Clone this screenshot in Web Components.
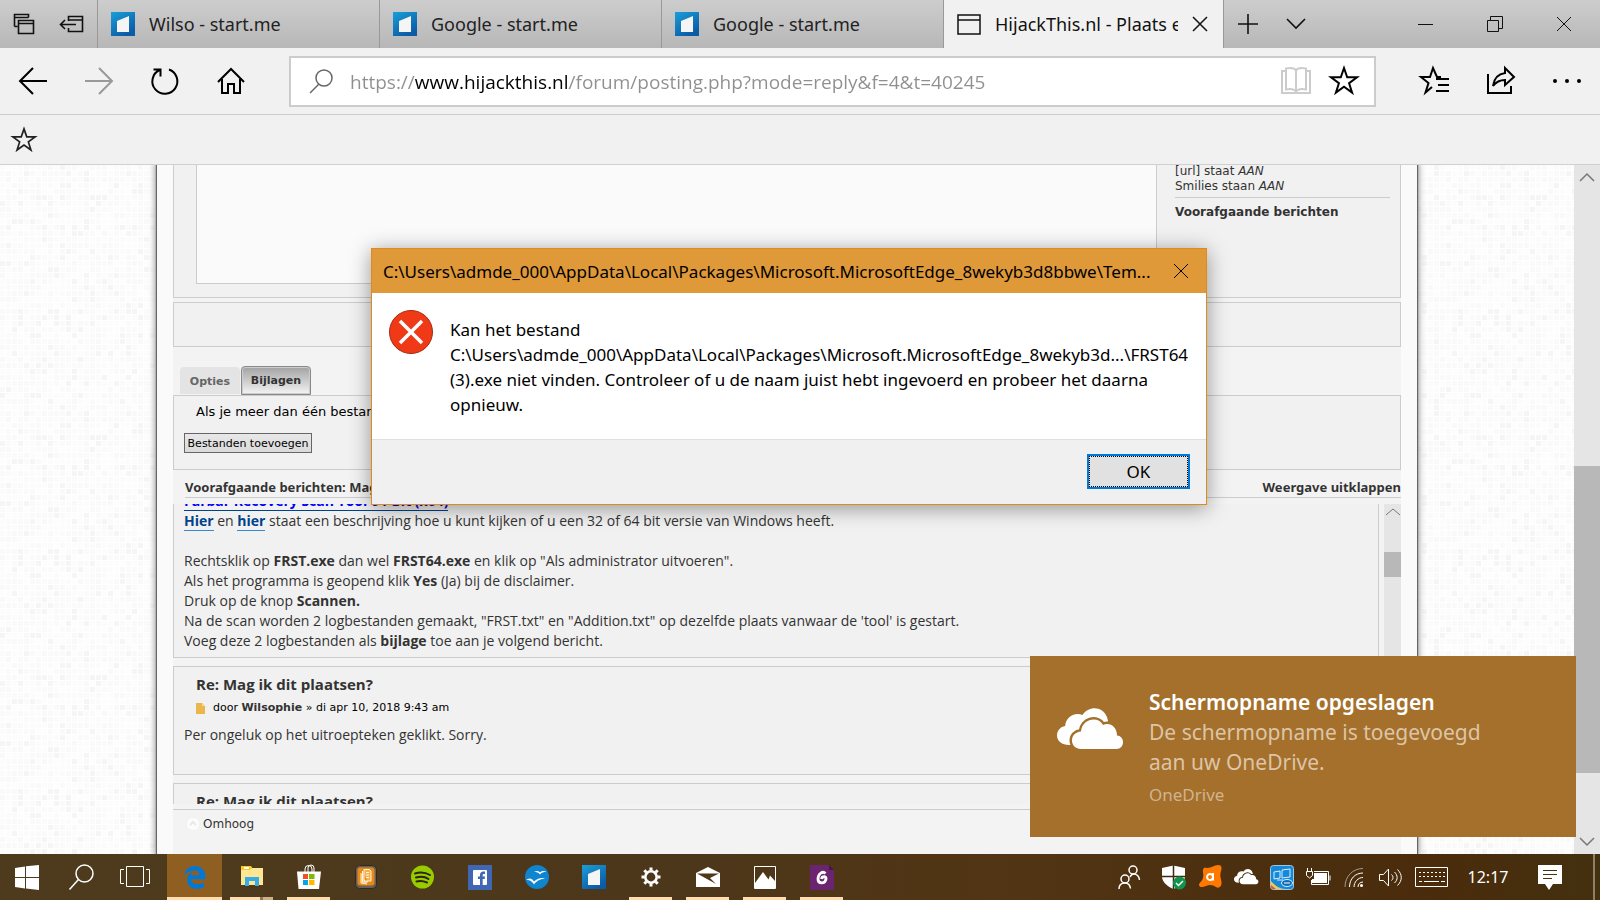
<!DOCTYPE html>
<html lang="nl">
<head>
<meta charset="utf-8">
<meta name="viewport" content="width=device-width, initial-scale=1">
<title>HijackThis.nl - Plaats een reactie</title>
<style>
  html, body { height: 100%; }
  body { margin: 0; overflow: hidden; font-family: "Noto Sans", "Open Sans", sans-serif; color: #333; }
</style>
</head>
<body>
<desktop-screen></desktop-screen>

<script>
const BASE = `*,*::before,*::after{box-sizing:border-box}
button{font:inherit;color:inherit;border:0;background:none;padding:0;margin:0;display:grid;place-items:center;cursor:default}
svg{display:block;overflow:visible}`;

function define(name, css, html, ready) {
  const template = document.createElement('template');
  template.innerHTML = `<style>${BASE}${css}</style>${html}`;
  customElements.define(name, class extends HTMLElement {
    constructor() {
      super();
      this.attachShadow({ mode: 'open' }).appendChild(template.content.cloneNode(true));
    }
    connectedCallback() { if (ready) ready(this, this.shadowRoot); }
  });
}

/* ---------- icons ---------- */
const line = (d, w = 1, extra = '') => `<path d="${d}" fill="none" stroke="currentColor" stroke-width="${w}" ${extra}/>`;
const STAR = 'M16 3l3.2 9.3H29l-7.9 5.9 3 9.4L16 21.8l-8.1 5.8 3-9.4L3 12.300h9.800z';
const cloud = gap => `<path fill="#fff" d="M12 37C5 37 0 33 0 27.500 0 22.500 3.500 18.800 8.200 18 8.500 10 17 3.500 25.500 7 33-4 49-1 51 13L46 37z"/>
  <path fill="#fff" stroke="${gap}" stroke-width="5" paint-order="stroke" d="M24 41C18.500 41 15 37 15 32.500 15 27.500 18.500 24 24 23.500 25 11 41 7.500 46 17 53 14 60 19 60 27.500 63.500 27.500 66 30.500 66 34 66 38 63.500 41 59.500 41z"/>`;
const ICONS = {
  tabsAside: [24, 24, line('M2.500 14.500V2.500h14v3M2.500 5.500h14M2.500 14.500h3M6.500 8.500h15v13h-15zM6.500 11.500h15', 1.6)],
  setAside: [26, 24, line('M9.500 9V4.500h14v15h-14V16M9.500 8h14', 1.6) + line('M17 12.500H2M6 8l-4.500 4.500L6 17', 1.6)],
  start: [24, 24, '<defs><linearGradient id="g" x2=".6" y2="1"><stop stop-color="#1a9fd8"/><stop offset="1" stop-color="#0b5ba5"/></linearGradient></defs><path fill="url(#g)" d="M0 0h24v24H0z"/><path fill="#f5f5f5" d="M6 9l12-5v16H6z"/>'],
  page: [24, 22, line('M1 2h22v19H1z', 1.5) + line('M1 7h22', 1.5)],
  close: [16, 16, line('M1 1l14 14M15 1L1 15', 1)],
  closeTab: [16, 16, line('M1 1l14 14M15 1L1 15', 1.5)],
  plus: [20, 20, line('M10 0v20M0 10h20', 1.6)],
  down: [20, 12, line('M1 1l9 9 9-9', 1.6)],
  min: [16, 16, line('M0 8.500h15')],
  restore: [16, 16, line('M.500 4.500h11v11H.500zM3.500 4V.500h12v12H12')],
  back: [32, 32, line('M30 16H3M16 3L3 16l13 13', 2)],
  forward: [32, 32, line('M2 16h27M16 3l13 13-13 13', 2)],
  refresh: [32, 32, line('M20 4.500A12.500 12.500 0 1 1 10.500 5M4.500 4.500h7v7', 2)],
  home: [32, 32, line('M3 17L16 4l13 13M7 14v14h6v-9h6v9h6V14', 2)],
  search: [28, 28, line('M12 17L3 26', 1.5) + '<circle cx="17" cy="11" r="8" fill="none" stroke="currentColor" stroke-width="1.5"/>'],
  book: [30, 30, line('M15 4C12 1 8 2 5 2.500v21c4-1 8-.500 10 2 2-2.500 6-3 10-2v-21C22 2 18 1 15 4zm0 0v21M5 5H1v22h28V5h-4', 2)],
  star: [32, 32, line(STAR, 2)],
  starList: [32, 32, line('M22 12h-4L14 3l-3 9H2l7.500 6-3 9.500L13 22M17 14h13M19 20h11M17 26h13', 2)],
  share: [32, 32, line('M3 9v19h23v-7M20 3l9 9-9 8v-5c-6 0-9 2-12 6 1-7 4-12 12-13z', 2)],
  dots: [28, 8, '<g fill="currentColor"><circle cx="2" cy="4" r="2"/><circle cx="14" cy="4" r="2"/><circle cx="26" cy="4" r="2"/></g>'],
  up: [14, 8, line('M0 7l7-6 7 6', 1)],
  upWide: [16, 9, line('M1 8l7-7 7 7', 1.5)],
  downWide: [16, 9, line('M1 1l7 7 7-7', 1.5)],
  error: [44, 44, '<circle cx="22" cy="22" r="21.500" fill="#f03a17" stroke="#a52a10"/><path d="M11 11l22 22M33 11L11 33" stroke="#fff" stroke-width="3.500"/>'],
  note: [9, 11, '<path fill="#ecb64c" d="M0 0h6l3 3v8H0z"/><path fill="#f7dca4" d="M6 0l3 3H6z"/>'],
  upCircle: [12, 12, '<circle cx="6" cy="6" r="6" fill="#fcfcfc"/><path d="M3 7l3-3 3 3" fill="none" stroke="#e8e8e8" stroke-width="2"/>'],
  cloudLarge: [66, 42, cloud('#a4702c')],
  windows: [24, 25, '<path fill="#fff" d="M0 3l10-1.500V12H0zM11 1.300L24 0v12H11zM0 13h10v10.500L0 22zM11 13h13v12l-13-1.500z"/>'],
  taskSearch: [25, 26, '<circle cx="15.500" cy="9.500" r="8.500" fill="none" stroke="#fff" stroke-width="1.500"/><path d="M9.500 15.500L.500 25.500" stroke="#fff" stroke-width="1.500"/>'],
  taskView: [30, 22, '<path fill="none" stroke="#fff" d="M6.500.500h17v20h-17zM4 3.500H.500v14H4M26 3.500h3.500v14H26"/>'],
  edge: [21, 22, '<path fill="#0078d7" transform="scale(.86)" d="M.5 11C1.100 5 5 0 12.800 0c4.600.1 8.400 2.200 10.600 6.100 1.100 2 1.500 4.200 1.500 6.600v2.800H8.500c.1 6.900 10.100 6.600 14.500 3.600v5.500c-2.500 1.500-8.200 2.900-12.700 1.200-3.800-1.400-6.500-5.400-6.500-9.200 0-5 2.400-8.200 6.500-10.100-.9 1-1.500 2.200-1.800 4.300h9.300s.5-5.500-5.200-5.500C7 5.300 3 8 .5 11z"/>'],
  folder: [22, 20, '<path fill="#f9c928" d="M0 0h10l2 3v4H0z"/><path fill="#fff" d="M3 1h5v2H3z"/><path fill="#ffe694" d="M0 4h9l2-2h11v17H0z"/><path fill="#35ace3" d="M4 20v-9h14v9h-4v-5H8v5z"/>'],
  store: [24, 24, '<path d="M8 7V4a3.500 3.500 0 0 1 7 0v3M11 7V3a3 3 0 0 1 6 0v4" fill="none" stroke="#fff"/><path fill="#fff" d="M0 6.500h24L22 24H1.500z"/><path fill="#f25022" d="M6 9h5v5H6z"/><path fill="#7fba00" d="M12 9h5.500v5H12z"/><path fill="#00a4ef" d="M6 15h5v5H6z"/><path fill="#ffb900" d="M12 15h5.500v5H12z"/>'],
  cards: [22, 24, '<rect x=".500" y=".500" width="21" height="23" rx="4" fill="#6a6058" stroke="#32291e"/><rect x="2.500" y="2.500" width="17" height="18" rx="3" fill="#e48a16"/><path fill="#f6b04c" stroke="#fff3dc" d="M6 8v10l6 1M7.500 6v11h5.500M9 4.500h5.500l1.500 1.500v10H9z"/><path stroke="#fff3dc" d="M11 7.500h3M11 10h3M11 12.500h3"/>'],
  spotify: [23, 24, '<circle cx="11.500" cy="12" r="11.500" fill="#9c0"/><path d="M4 8.500c5-1.500 10.500-1 15 1.500M5 12.500c4-1 9-1 12.500 1.500M5.500 16.500c4-1 7-.500 10.500 1" fill="none" stroke="#2b2413" stroke-width="2" stroke-linecap="round"/>'],
  facebook: [24, 24, '<path fill="#4267b2" d="M0 0h24v25H0z"/><rect x="5" y="5" width="14" height="15" rx="1" fill="#fff"/><path fill="#4267b2" d="M12 20v-6h-2v-2.500h2V10c0-2.300 1.200-3.500 3.300-3.500H17V9h-1.200c-.8 0-1.100.3-1.100 1v1.500H17l-.3 2.500h-2v6z"/>'],
  gulls: [24, 24, '<circle cx="12" cy="12" r="12" fill="#0f84cf"/><path fill="#fff" d="M9 7c3-1.500 4.500-1 6 .500 1.500-1.500 4-2 6.500-.500-3 0-5 .500-6.500 2.500C13.500 7.500 11.500 7 9 7zM1 15c3-2.500 6-2 8 1.500 2.500-2.500 7-4.500 12-3-4 0-9.500 2-12 6C7 16 4.500 14.500 1 15z"/>'],
  gear: [20, 20, '<circle cx="10" cy="10" r="5.700" fill="none" stroke="#fff" stroke-width="2.600"/><path stroke="#fff" stroke-width="3" stroke-dasharray="3 14" d="M10 .500v3M10 16.500v3M.500 10h3M16.500 10h3M3.300 3.300l2 2M14.700 14.700l2 2M16.700 3.300l-2 2M5.300 14.700l-2 2"/>'],
  mail: [24, 20, '<path fill="#fff" d="M0 6L12 0l12 6v14H0z"/><path fill="#4f3819" d="M1 6.500h22L14 11l6 6-9-5z"/>'],
  photos: [22, 23, '<path fill="none" stroke="#fff" d="M.500.500h21v22H.500z"/><path fill="#fff" d="M1 17L9 6l5.500 7.500L16 9.500 21 15v7H1z"/>'],
  gallery: [24, 25, '<path fill="#6b2470" d="M0 0h18l6 6v19H0z"/><path fill="#4b1450" d="M19 0l5 5h-5z"/><path d="M15.500 8.500c-3-3-7.500.500-7.500 5.500s7 5.500 8 0c.5-3-4-3-4.500 0" fill="none" stroke="#fff" stroke-width="2.800"/>'],
  people: [22, 24, '<g fill="none" stroke="#fff" stroke-width="1.500"><circle cx="15" cy="5" r="4"/><circle cx="7" cy="14" r="4"/><path d="M1 24c0-4 2.500-6 6-6s5 2 5.500 5.500M12 12c1-2 2-3 3.500-3 3.500 0 5.500 2 6 6"/></g>'],
  shield: [24, 24, '<path fill="#fff" d="M11.500.500L23 3v8c0 6-5 10.500-11.500 13C5 21.500 0 17 0 11V3z"/><path stroke="#3b2b12" stroke-width="1.500" d="M11.500 0v24M0 11.500h23"/><circle cx="17.500" cy="18" r="6.500" fill="#10934a"/><path d="M14 18l2.500 2.500L21 16" fill="none" stroke="#fff" stroke-width="1.500"/>'],
  avast: [23, 24, '<path fill="#ff7800" d="M8 3c5 0 7-3 11-3 4 0 4 3 3 6-1.500 5 0 7 .500 11S20 24 17 22s-6-3-10-1-7 1-7-1 3-3.500 4-7-.5-5 0-8 2-2 4-2z"/><path d="M14 8v7.500M14 11.500a3 3 0 1 0 0 1" fill="none" stroke="#fff" stroke-width="2"/>'],
  cloudSmall: [24, 16, `<g transform="scale(.37)">${cloud('#49310f')}</g>`],
  intel: [24, 25, '<rect x=".500" y=".500" width="23" height="24" rx="3" fill="#1688d8" stroke="#9ac9e8"/><path fill="#f7c948" d="M1 16c4 5 9 8 15 8H3a2 2 0 0 1-2-2z"/><path fill="#e05533" d="M1 20l5 4H3a2 2 0 0 1-2-2z"/><path fill="none" stroke="#d9efff" d="M4 7l6-1v7l-6 1zM12 5l8-1v8l-8 1zM7 15h6"/><ellipse cx="17" cy="18" rx="5.500" ry="3.500" fill="#0c6cb8" stroke="#d9efff"/><path d="M14 18h6" stroke="#fff"/>'],
  battery: [24, 18, '<path fill="#fff" d="M8 5h13v10H6v-4h2z"/><path fill="none" stroke="#fff" d="M8 3.500h14.500v13H5.500V12M24 7.500v5M1.500 0v3M5.500 0v3M.500 3.500h6v4l-3 2.500-3-2.500z"/>'],
  wifi: [20, 20, '<g fill="none" stroke="#fff"><path opacity=".5" d="M1 20C1 9 9 1.500 19 1.500"/><path d="M5.500 20C5.500 12 11 6 19 6M10 20c0-5 4-9.500 9-9.500M14 20c0-3 2-5 5-5"/></g><circle cx="17.500" cy="18.500" r="1.500" fill="#fff"/>'],
  volume: [23, 19, '<path fill="none" stroke="#fff" d="M.500 6.500h4l5-5.500v17l-5-5.500h-4zM12.500 6.500c2 2 2 4 0 6M15.500 4c3.500 3.500 3.500 7.500 0 11M18.500 1.500c5 5 5 11 0 16"/>'],
  keyboard: [33, 20, '<path fill="none" stroke="#fff" d="M.500.500h32v19H.500z"/><path stroke="#fff" stroke-dasharray="2 2" d="M4 5.500h26M4 9.500h26"/><path stroke="#fff" d="M4 14.500h3M9 14.500h15M26 14.500h4"/>'],
  message: [24, 25, '<path fill="#fff" d="M0 0h24v19h-9l-4 6-4-6H0z"/><path stroke="#49310f" stroke-width="1.200" d="M5 5.500h14M5 9.500h14M5 13.500h9"/>']
};
customElements.define('line-icon', class extends HTMLElement {
  connectedCallback() {
    if (this.shadowRoot) return;
    const [w, h, body] = ICONS[this.getAttribute('name')];
    this.attachShadow({ mode: 'open' }).innerHTML =
      `<style>:host{display:block;flex:none}svg{display:block;overflow:visible}</style><svg width="${w}" height="${h}" viewBox="0 0 ${w} ${h}" aria-hidden="true">${body}</svg>`;
  }
});

/* ---------- browser chrome ---------- */
define('browser-tab', `
  :host{display:flex;flex:0 1 282px;min-width:0;align-items:center;gap:14px;padding:0 15px 0 13px;border-right:1px solid #999;font:18px/48px "Noto Sans",sans-serif;color:#222}
  :host([active]){background:#f1f1f1;flex-basis:280px;color:#111}
  .label{flex:1;min-width:0;overflow:hidden;white-space:nowrap}
  button{display:none}
  :host([active]) button{display:grid}`,
  `<slot name="icon"></slot><span class="label"><slot></slot></span><button aria-label="Tabblad sluiten"><line-icon name="closeTab"></line-icon></button>`);

define('tab-strip', `
  :host{display:flex;height:48px;background:linear-gradient(#cdcdcd,#b7b7b7);color:#111}
  .aside{display:flex;width:98px;border-right:1px solid #999;flex:none}
  .aside button{width:48px}
  .extra{width:48px;flex:none}
  .window{display:flex;margin-left:auto;padding-right:2px}
  .window button{width:69px}`,
  `<div class="aside"><button aria-label="Tabbladen"><line-icon name="tabsAside"></line-icon></button><button aria-label="Opzijzetten"><line-icon name="setAside"></line-icon></button></div>
   <browser-tab><line-icon slot="icon" name="start"></line-icon>Wilso - start.me</browser-tab>
   <browser-tab><line-icon slot="icon" name="start"></line-icon>Google - start.me</browser-tab>
   <browser-tab><line-icon slot="icon" name="start"></line-icon>Google - start.me</browser-tab>
   <browser-tab active><line-icon slot="icon" name="page"></line-icon>HijackThis.nl - Plaats een reactie</browser-tab>
   <button class="extra" aria-label="Nieuw tabblad"><line-icon name="plus"></line-icon></button>
   <button class="extra" aria-label="Voorbeelden"><line-icon name="down"></line-icon></button>
   <div class="window"><button aria-label="Minimaliseren"><line-icon name="min"></line-icon></button><button aria-label="Verkleinen"><line-icon name="restore"></line-icon></button><button aria-label="Sluiten"><line-icon name="close"></line-icon></button></div>`);

define('nav-bar', `
  :host{display:flex;align-items:center;height:67px;background:#f1f1f1;border-bottom:1px solid #ccc;color:#000}
  .nav{width:66px;height:66px;flex:none}
  .nav:disabled{color:#999}
  .address{flex:1;min-width:0;display:flex;align-items:center;height:51px;margin:0 26px 0 25px;padding:0 6px 0 16px;background:#fff;border:2px solid #ccc}
  .address line-icon{color:#666}
  .address button{width:48px;flex:none}
  .address .read line-icon{color:#ccc}
  .address .fav line-icon{color:#000}
  input{flex:1;min-width:0;height:42px;margin:0 0 0 15px;padding:2px 0 0;border:0;outline:0;font:19px/40px "Open Sans",sans-serif;color:#8f8f8f}
  input.split{background:linear-gradient(90deg,#8f8f8f var(--from),#000 var(--from),#000 var(--to),#8f8f8f var(--to));-webkit-background-clip:text;background-clip:text;-webkit-text-fill-color:transparent}`,
  `<button class="nav" aria-label="Terug"><line-icon name="back"></line-icon></button>
   <button class="nav" aria-label="Vooruit" disabled><line-icon name="forward"></line-icon></button>
   <button class="nav" aria-label="Vernieuwen"><line-icon name="refresh"></line-icon></button>
   <button class="nav" aria-label="Startpagina"><line-icon name="home"></line-icon></button>
   <div class="address"><line-icon name="search"></line-icon><input type="text" aria-label="Adres" value="https://www.hijackthis.nl/forum/posting.php?mode=reply&amp;f=4&amp;t=40245">
   <button class="read" aria-label="Leesweergave"><line-icon name="book"></line-icon></button><button class="fav" aria-label="Favoriet"><line-icon name="star"></line-icon></button></div>
   <button class="nav" aria-label="Favorieten"><line-icon name="starList"></line-icon></button>
   <button class="nav" aria-label="Delen"><line-icon name="share"></line-icon></button>
   <button class="nav" aria-label="Meer"><line-icon name="dots"></line-icon></button>`,
  (el, root) => {
    /* The host name is darker than the rest of the address. */
    const input = root.querySelector('input');
    const pen = document.createElement('canvas').getContext('2d');
    pen.font = '19px "Open Sans"';
    const scheme = 'https://', host = new URL(input.value).host;
    input.style.setProperty('--from', Math.round(pen.measureText(scheme).width) + 'px');
    input.style.setProperty('--to', Math.round(pen.measureText(scheme + host).width) + 'px');
    input.classList.add('split');
  });

define('favorites-bar', `
  :host{display:flex;align-items:center;height:50px;padding-left:12px;background:#f1f1f1;border-bottom:1px solid #d0d0d0;color:#222}
  svg{width:24px;height:24px}`,
  `<button aria-label="Favorieten toevoegen"><svg viewBox="2 2 28 28" aria-hidden="true">${line(STAR, 2)}</svg></button>`);

define('scroll-bar', `
  :host{display:grid;grid-template-rows:auto 1fr auto;background:#e5e5e5;color:#777;justify-items:center}
  .track{width:100%;display:grid;grid-template-rows:var(--before) var(--thumb) 1fr}
  .thumb{grid-row:2;background:#b8b8b8}`,
  `<slot name="up"></slot><div class="track"><div class="thumb"></div></div><slot name="down"></slot>`);

/* ---------- forum page ---------- */
define('mosaic-backdrop', `
  :host{position:absolute;inset:0;background:#fff}
  svg{width:100%;height:100%}`,
  `<svg aria-hidden="true"><defs><pattern id="m" width="240" height="240" patternUnits="userSpaceOnUse"></pattern></defs><rect width="100%" height="100%" fill="url(#m)"/></svg>`,
  (el, root) => {
    let seed = 7, cells = '';
    const shades = ['#fbfbfb', '#fcfcfc', '#fafafa', '#f9f9f9', '#fcfcfc', '#f5f5f5', '#fdfdfd', '#fafafa'];
    for (let y = 0; y < 240; y += 6) for (let x = 0; x < 240; x += 6) {
      seed = (seed * 1103515245 + 12345) % 2147483648;
      cells += `<rect x="${x}" y="${y}" width="5" height="5" fill="${shades[(seed >> 16) % 8]}"/>`;
    }
    root.querySelector('pattern').innerHTML = cells;
  });

define('forum-panel', `:host{display:block;background:#f1f1f1;border:1px solid #ccc}`, `<slot></slot>`);

define('editor-panel', `
  :host{display:flex;height:133px;padding-left:22px;background:#f1f1f1;border:1px solid #ccc;border-top:0}
  textarea{flex:1;min-width:0;height:119px;margin:0;padding:4px;background:#fafafa;border:1px solid #ccc;border-top:0;resize:none;outline:0}
  aside{width:243px;margin-top:-1px;padding:0 10px 0 18px;font:12px/15px "DejaVu Sans",Verdana,sans-serif;color:#333}
  p{margin:0}
  hr{margin:3px 0 6px;border:0;border-top:1px solid #ccc}
  h3{margin:0;font:bold 12px/16px "DejaVu Sans",Verdana,sans-serif}`,
  `<textarea aria-label="Bericht"></textarea><aside><p>[url] staat <em>AAN</em></p><p>Smilies staan <em>AAN</em></p><hr><h3>Voorafgaande berichten</h3></aside>`);

define('option-tabs', `
  :host{display:flex;align-items:flex-end;gap:1px;height:29px;padding-left:7px;font:bold 11px/16px "DejaVu Sans",Verdana,sans-serif}
  button{height:27px;width:60px;margin-bottom:1px;padding-top:2px;background:#e4e4e4;border-radius:4px 4px 0 0;color:#666}
  button.on{width:70px;height:29px;margin:0;padding:0;border:1px solid #888;box-shadow:inset 0 0 0 1px #ccc;background:linear-gradient(#a2a2a2,#f4f4f4);color:#333}`,
  `<button>Opties</button><button class="on">Bijlagen</button>`);

define('attachment-panel', `
  :host{display:block;height:75px;padding:6px 10px;background:#f1f1f1;border:1px solid #ccc}
  p{margin:0 12px 11px;font:13px/20px "DejaVu Sans",Verdana,sans-serif;color:#000}
  button{height:20px;width:128px;padding-top:1px;border:1px solid #666;background:linear-gradient(#e8e8e8,#dadada);font:11px/16px "DejaVu Sans",Verdana,sans-serif;color:#000}`,
  `<p>Als je meer dan één bestand wilt toevoegen, gebruik dan</p><button>Bestanden toevoegen</button>`);

define('forum-post', `
  :host{display:block;padding:7px 10px 29px;background:#f1f1f1;border:1px solid #ccc;font:14px/20px "Open Sans","Trebuchet MS",sans-serif;color:#333}
  .head{padding-left:12px}
  .meta{display:flex;align-items:center;gap:8px;margin:4px 0 7px;font:11px/20px "DejaVu Sans",Verdana,sans-serif;color:#000}
  ::slotted(h3){margin:0;font:bold 15px/20px "Open Sans","Trebuchet MS",sans-serif}`,
  `<div class="head"><slot name="title"></slot><div class="meta"><line-icon name="note"></line-icon><slot name="meta"></slot></div></div><slot></slot>`);

define('topic-review', `
  :host{display:block}
  header{display:flex;justify-content:space-between;margin-left:12px;height:19px;font:bold 13px/17px "Noto Sans",sans-serif;border-bottom:1px solid #ccc}
  header a{color:#333;text-decoration:none}
  .view{display:flex;height:300px;margin-top:6px;overflow:hidden}
  .posts{flex:1;min-width:0;padding-right:5px}
  .first{margin:-15px 0 8px;padding:1px 10px 6px;border:1px solid #ccc;background:#f1f1f1;font:14px/20px "Open Sans","Trebuchet MS",sans-serif}
  .first p{margin:0 0 20px}
  .first p:last-child{margin:0}
  .first a{color:#00438a;font-weight:bold;text-decoration:none;box-shadow:0 1px #368ad2}
  .first a.tool{color:#00f;box-shadow:0 1px #00438a}
  scroll-bar{width:17px;height:100%;--before:32px;--thumb:25px}
  scroll-bar line-icon{margin-top:4px;height:12px}
  forum-post{margin-bottom:8px}
  h3,strong{color:#333}`,
  `<header><span>Voorafgaande berichten: Mag ik dit plaatsen?</span><a href="#">Weergave uitklappen</a></header>
   <div class="view"><div class="posts">
     <div class="first"><p><a class="tool" href="#">Farbar Recovery Scan Tool 64-Bit (x64)</a><br><a href="#">Hier</a> en <a href="#">hier</a> staat een beschrijving hoe u kunt kijken of u een 32 of 64 bit versie van Windows heeft.</p>
     <p>Rechtsklik op <strong>FRST.exe</strong> dan wel <strong>FRST64.exe</strong> en klik op "Als administrator uitvoeren".<br>Als het programma is geopend klik <strong>Yes</strong> (Ja) bij de disclaimer.<br>Druk op de knop <strong>Scannen.</strong><br>Na de scan worden 2 logbestanden gemaakt, "FRST.txt" en "Addition.txt" op dezelfde plaats vanwaar de 'tool' is gestart.<br>Voeg deze 2 logbestanden als <strong>bijlage</strong> toe aan je volgend bericht.</p></div>
     <forum-post><h3 slot="title">Re: Mag ik dit plaatsen?</h3><span slot="meta">door <strong>Wilsophie</strong> » di apr 10, 2018 9:43 am</span>Per ongeluk op het uitroepteken geklikt. Sorry.</forum-post>
     <forum-post><h3 slot="title">Re: Mag ik dit plaatsen?</h3></forum-post>
   </div><scroll-bar><line-icon slot="up" name="up"></line-icon></scroll-bar></div>`);

define('forum-page', `
  :host{position:relative;display:flex;width:100%;max-width:1260px;height:100%;margin:0 auto;padding:0 16px;background:#fafafa;box-shadow:0 0 1px 1px #666,0 0 6px 2px #999;overflow:visible}
  main{flex:1;min-width:0;background:#f3f3f3;overflow:hidden}
  .buttons{height:45px;margin:4px 0 19px}
  topic-review{margin-top:9px}
  footer{display:flex;align-items:center;gap:4px;height:28px;margin-top:5px;padding-left:14px;border-top:1px solid #ccc;font:12px/16px "DejaVu Sans",Verdana,sans-serif}
  footer a{color:#333;text-decoration:none}`,
  `<main><editor-panel></editor-panel><forum-panel class="buttons"></forum-panel><option-tabs></option-tabs><attachment-panel></attachment-panel><topic-review></topic-review>
   <footer><line-icon name="upCircle"></line-icon><a href="#">Omhoog</a></footer></main>`);

/* ---------- windows over the page ---------- */
define('error-dialog', `
  :host{position:absolute;top:83px;left:50%;width:836px;margin-left:-429px;border:1px solid #e08a1a;background:#fff;box-shadow:0 3px 20px rgba(0,0,0,.4);font:17px/25px "Noto Sans",sans-serif;color:#000}
  header{display:flex;align-items:center;height:44px;padding-left:11px;background:#df9938}
  header span{flex:1;white-space:nowrap}
  header button{width:50px;height:44px}
  .body{display:flex;gap:17px;height:146px;padding:17px 0 0 17px}
  p{margin:7px 0 0;width:750px}
  footer{display:flex;justify-content:flex-end;height:65px;padding:14px 16px;background:#f0f0f0;border-top:1px solid #dfdfdf}
  footer button{width:103px;height:35px;background:#e1e1e1;border:2px solid #0078d7;outline:1px dotted #000;outline-offset:-3px}`,
  `<header><span>C:\\Users\\admde_000\\AppData\\Local\\Packages\\Microsoft.MicrosoftEdge_8wekyb3d8bbwe\\Tem...</span><button aria-label="Sluiten"><line-icon name="close"></line-icon></button></header>
   <div class="body"><line-icon name="error"></line-icon><p>Kan het bestand<br>C:\\Users\\admde_000\\AppData\\Local\\Packages\\Microsoft.MicrosoftEdge_8wekyb3d...\\FRST64<br>(3).exe niet vinden. Controleer of u de naam juist hebt ingevoerd en probeer het daarna<br>opnieuw.</p></div>
   <footer><button>OK</button></footer>`);

define('toast-message', `
  :host{position:absolute;right:24px;bottom:17px;display:flex;gap:26px;width:546px;height:181px;padding:31px 27px;background:#a4702c;font:21px/30px "Noto Sans",sans-serif;color:#dcc5a6}
  line-icon{margin-top:21px}
  h2{margin:0;font:600 21px/30px "Noto Sans",sans-serif;color:#fff}
  p{margin:0;width:345px}
  small{display:block;margin-top:4px;font-size:17px;line-height:28px;color:#d1b48e}`,
  `<line-icon name="cloudLarge"></line-icon><div><h2>Schermopname opgeslagen</h2><p>De schermopname is toegevoegd aan uw OneDrive.</p><small>OneDrive</small></div>`);

/* ---------- taskbar ---------- */
define('task-button', `
  :host{display:flex;width:57px;padding:0 7px}
  button{flex:1;height:46px}
  :host([running]) button{box-shadow:inset 0 -3px #ffdcae}
  :host([stacked]) button{border-bottom:3px solid;border-image:linear-gradient(90deg,#ffdcae 29px,#8a7659 29px,#8a7659 31px,#ceb08b 31px) 3;box-shadow:none}
  :host([system]){width:54px;padding:0}
  :host([current]){width:55px;padding:0;margin:0 1px 0 5px;background:#8f5f22}`,
  `<button><slot></slot></button>`,
  (el, root) => root.querySelector('button').setAttribute('aria-label', el.getAttribute('label')));

define('task-bar', `
  :host{display:flex;height:46px;background:linear-gradient(90deg,#4e3b1d,#4c371b 40%,#513514 62%,#4c3010 75%,#4a2c0c 90%,#43300f);color:#fff}
  .tray{display:flex;margin-left:auto}
  .tray button{width:36px}
  .tray .people{width:44px;margin-right:5px}
  .tray .keyboard{width:46px}
  .tray .clock{width:68px;font:16px/20px "Noto Sans",sans-serif}
  .tray .messages{width:56px}
  .tray .desktop{width:22px;border-left:2px solid #8e8068;margin-left:15px;margin-right:-15px}`,
  `${[['windows', 'Start', 'system'], ['taskSearch', 'Zoeken', 'system'], ['taskView', 'Taakweergave', 'system'], ['edge', 'Edge', 'current running'], ['folder', 'Verkenner', 'running stacked'], ['store', 'Store', 'running'], ['cards', 'Solitaire', ''], ['spotify', 'Spotify', ''], ['facebook', 'Facebook', ''], ['gulls', 'OpenOffice', ''], ['start', 'start.me', ''], ['gear', 'Instellingen', 'running'], ['mail', 'Mail', 'running'], ['photos', "Foto's", 'running'], ['gallery', 'Galerij', 'running']].map(([i, l, a]) => `<task-button label="${l}" ${a}><line-icon name="${i}"></line-icon></task-button>`).join('')}
   <div class="tray"><button class="people" aria-label="Personen"><line-icon name="people"></line-icon></button>
   ${[['shield', 'Defender'], ['avast', 'Avast'], ['cloudSmall', 'OneDrive'], ['intel', 'Intel'], ['battery', 'Accu'], ['wifi', 'Netwerk'], ['volume', 'Volume']].map(([i, l]) => `<button aria-label="${l}"><line-icon name="${i}"></line-icon></button>`).join('')}<button class="keyboard" aria-label="Toetsenbord"><line-icon name="keyboard"></line-icon></button><button class="clock">12:17</button><button class="messages" aria-label="Actiecentrum"><line-icon name="message"></line-icon></button><button class="desktop" aria-label="Bureaublad"></button></div>`);

/* ---------- whole screen ---------- */
define('desktop-screen', `
  :host{display:flex;flex-direction:column;height:100vh;overflow:hidden}
  .viewport{position:relative;flex:1;min-height:0;display:flex}
  .canvas{position:relative;flex:1;min-width:0;overflow:hidden}
  scroll-bar{width:26px;--before:276px;--thumb:307px}
  scroll-bar line-icon{margin:8px 0}`,
  `<tab-strip></tab-strip><nav-bar></nav-bar><favorites-bar></favorites-bar>
   <div class="viewport"><div class="canvas"><mosaic-backdrop></mosaic-backdrop><forum-page></forum-page></div>
   <scroll-bar><line-icon slot="up" name="upWide"></line-icon><line-icon slot="down" name="downWide"></line-icon></scroll-bar>
   <error-dialog></error-dialog><toast-message></toast-message></div>
   <task-bar></task-bar>`);
</script>
</body>
</html>
